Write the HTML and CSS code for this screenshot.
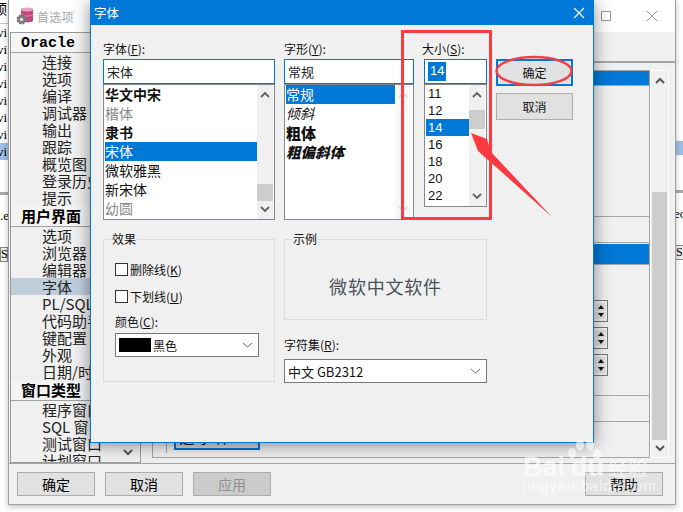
FILE: index.html
```html
<!DOCTYPE html>
<html lang="zh">
<head>
<meta charset="utf-8">
<title>字体</title>
<link rel="stylesheet" href="styles.css">
</head>
<body>
<div class="desktop">
  <div class="sliver sliver-left">
    <div class="sl-top">预</div>
    <div class="sl-row">vi</div><div class="sl-row">vi</div><div class="sl-row">vi</div><div class="sl-row">vi</div>
    <div class="sl-row">vi</div><div class="sl-row">vi</div><div class="sl-row">vi</div><div class="sl-row sl-sel">vi</div>
    <div class="sl-gap"></div>
    <div class="sl-line"></div>
    <div class="sl-text">.e</div>
    <div class="sl-btn">SE</div>
  </div>
  <div class="sliver sliver-right">
    <div class="sr-sel"></div>
    <div class="sl-line"></div>
    <div class="sl-text sr-text">eo</div>
    <div class="sl-btn sr-btn">S</div>
  </div>

  <section class="prefs">
    <header class="prefs-title">
      <svg class="app-icon" width="18" height="20" viewBox="0 0 18 20">
        <path d="M5 3.5C5 1.5 17 1.5 17 3.5V14.5C17 17 5 17 5 14.5Z" fill="#c2487c"/>
        <ellipse cx="11" cy="3.5" rx="6" ry="2" fill="#e8a3bf"/>
        <path d="M5 8.5C7 10.5 15 10.5 17 8.5" stroke="#e08aae" fill="none"/>
        <circle cx="5.5" cy="13.5" r="4" fill="#777" stroke="#777" stroke-width="2" stroke-dasharray="2 1.2"/>
        <circle cx="5.5" cy="13.5" r="1.8" fill="#e6e6e6"/>
      </svg>
      <span class="prefs-name">首选项</span>
      <span class="spacer"></span>
      <span class="win-max"></span>
      <svg class="win-close" width="12" height="12" viewBox="0 0 12 12"><path d="M1 1L11 11M11 1L1 11" stroke="#9a9a9a" fill="none"/></svg>
    </header>
    <div class="prefs-body">
      <nav class="tree">
        <div class="tree-head tree-first">Oracle</div>
        <div class="tree-item">连接</div><div class="tree-item">选项</div><div class="tree-item">编译</div>
        <div class="tree-item">调试器</div><div class="tree-item">输出</div><div class="tree-item">跟踪</div>
        <div class="tree-item">概览图</div><div class="tree-item">登录历史</div><div class="tree-item">提示</div>
        <div class="tree-head">用户界面</div>
        <div class="tree-item">选项</div><div class="tree-item">浏览器</div><div class="tree-item">编辑器</div>
        <div class="tree-item tree-sel">字体</div><div class="tree-item">PL/SQL</div><div class="tree-item">代码助手</div>
        <div class="tree-item">键配置</div><div class="tree-item">外观</div><div class="tree-item">日期/时间</div>
        <div class="tree-head">窗口类型</div>
        <div class="tree-item">程序窗口</div><div class="tree-item">SQL 窗口</div><div class="tree-item">测试窗口</div>
        <div class="tree-item">计划窗口</div>
        <svg class="tree-down" width="10" height="7" viewBox="0 0 10 7"><path d="M1 1L5 5L9 1" stroke="#555" stroke-width="2" fill="none"/></svg>
      </nav>
      <div class="panel">
        <div class="panel-top"></div>
        <div class="panel-main">
          <div class="grid-box">
            <div class="gr-blue gr-blue-a"></div>
            <div class="gr-blank gr-h1"></div>
            <div class="gr-blank gr-h2"></div>
            <div class="gr-blue gr-blue-b"></div>
            <div class="gr-spin">
              <div class="spin"><i class="tri-up"></i><i class="tri-down"></i></div>
              <div class="spin"><i class="tri-up"></i><i class="tri-down"></i></div>
              <div class="spin"><i class="tri-up"></i><i class="tri-down"></i></div>
            </div>
            <div class="gr-blank gr-h3"></div>
            <div class="gr-last">
              <span class="gr-vline"></span>
              <span class="font-btn">选字体...</span>
            </div>
          </div>
          <div class="panel-scroll">
            <svg width="10" height="7" viewBox="0 0 10 7"><path d="M1 6L5 2L9 6" stroke="#555" stroke-width="2" fill="none"/></svg>
            <div class="panel-thumb"></div>
            <svg width="10" height="7" viewBox="0 0 10 7"><path d="M1 1L5 5L9 1" stroke="#555" stroke-width="2" fill="none"/></svg>
          </div>
        </div>
      </div>
    </div>
    <footer class="prefs-foot">
      <button class="foot-btn">确定</button>
      <button class="foot-btn">取消</button>
      <button class="foot-btn foot-off">应用</button>
      <span class="spacer"></span>
      <button class="foot-btn">帮助</button>
    </footer>
  </section>

  <section class="dialog">
    <header class="dlg-title">
      <span>字体</span>
      <svg width="12" height="12" viewBox="0 0 12 12"><path d="M1 1L11 11M11 1L1 11" stroke="#fff" stroke-width="1.2" fill="none"/></svg>
    </header>
    <div class="dlg-body">
      <div class="dlg-top">
        <div class="col col-font">
          <label class="lab">字体(<u>F</u>):</label>
          <div class="input">宋体</div>
          <div class="list list-tall">
            <div class="list-items">
              <div class="li li-font li-b">华文中宋</div>
              <div class="li li-font li-grey">楷体</div>
              <div class="li li-font li-b">隶书</div>
              <div class="li li-font li-sel">宋体</div>
              <div class="li li-font">微软雅黑</div>
              <div class="li li-font">新宋体</div>
              <div class="li li-font li-grey">幼圆</div>
            </div>
            <div class="sb">
              <svg width="10" height="7" viewBox="0 0 10 7"><path d="M1 6L5 2L9 6" stroke="#606060" stroke-width="1.8" fill="none"/></svg>
              <div class="sb-fill"><div class="thumb thumb-font"></div></div>
              <svg width="10" height="7" viewBox="0 0 10 7"><path d="M1 1L5 5L9 1" stroke="#606060" stroke-width="1.8" fill="none"/></svg>
            </div>
          </div>
        </div>
        <div class="col col-style">
          <label class="lab">字形(<u>Y</u>):</label>
          <div class="input">常规</div>
          <div class="list list-tall">
            <div class="list-items">
              <div class="li li-font li-sel">常规</div>
              <div class="li li-font li-i">倾斜</div>
              <div class="li li-font li-bold">粗体</div>
              <div class="li li-font li-bi">粗偏斜体</div>
            </div>
            <div class="sb sb-off">
              <svg width="10" height="7" viewBox="0 0 10 7"><path d="M1 6L5 2L9 6" stroke="#dadada" stroke-width="1.8" fill="none"/></svg>
              <div class="sb-fill"></div>
              <svg width="10" height="7" viewBox="0 0 10 7"><path d="M1 1L5 5L9 1" stroke="#dadada" stroke-width="1.8" fill="none"/></svg>
            </div>
          </div>
        </div>
        <div class="col col-size">
          <label class="lab lab-size">大小(<u>S</u>):</label>
          <div class="input input-size"><span class="sel-text">14</span></div>
          <div class="list list-short">
            <div class="list-items">
              <div class="li li-size">11</div>
              <div class="li li-size">12</div>
              <div class="li li-size li-sel">14</div>
              <div class="li li-size">16</div>
              <div class="li li-size">18</div>
              <div class="li li-size">20</div>
              <div class="li li-size">22</div>
            </div>
            <div class="sb">
              <svg width="10" height="7" viewBox="0 0 10 7"><path d="M1 6L5 2L9 6" stroke="#606060" stroke-width="1.8" fill="none"/></svg>
              <div class="sb-fill"><div class="thumb thumb-size"></div></div>
              <svg width="10" height="7" viewBox="0 0 10 7"><path d="M1 1L5 5L9 1" stroke="#606060" stroke-width="1.8" fill="none"/></svg>
            </div>
          </div>
        </div>
        <div class="col col-btns">
          <button class="dlg-btn dlg-ok">确定</button>
          <button class="dlg-btn">取消</button>
        </div>
      </div>
      <div class="dlg-bottom">
        <fieldset class="group group-effect">
          <legend>效果</legend>
          <div class="check"><span class="box"></span>删除线(<u>K</u>)</div>
          <div class="check"><span class="box"></span>下划线(<u>U</u>)</div>
          <label class="lab lab-color">颜色(<u>C</u>):</label>
          <div class="select select-color">
            <span class="swatch"></span><span>黑色</span>
            <span class="spacer"></span>
            <svg width="11" height="6" viewBox="0 0 11 6"><path d="M1 1L5.5 5L10 1" stroke="#666" fill="none"/></svg>
          </div>
        </fieldset>
        <div class="col-sample">
          <fieldset class="group group-sample">
            <legend>示例</legend>
            <div class="sample">微软中文软件</div>
          </fieldset>
          <label class="lab lab-charset">字符集(<u>R</u>):</label>
          <div class="select select-charset">
            <span>中文 GB2312</span>
            <span class="spacer"></span>
            <svg width="11" height="6" viewBox="0 0 11 6"><path d="M1 1L5.5 5L10 1" stroke="#666" fill="none"/></svg>
          </div>
        </div>
      </div>
    </div>
  </section>

  <svg class="marks" width="683" height="512" viewBox="0 0 683 512">
    <rect x="402.5" y="31.5" width="88" height="187" fill="none" stroke="#fb3b40" stroke-width="3"/>
    <ellipse cx="534" cy="71" rx="37.5" ry="14" fill="none" stroke="#ef4048" stroke-width="2.5"/>
    <polygon points="471,133 487,139 491,152 552,217 487,159 478,151" fill="#fb3b40"/>
  </svg>

  <div class="watermark">
    <svg class="wm-paw" width="40" height="36" viewBox="0 0 40 36">
      <g fill="#fff" fill-opacity=".62">
        <ellipse cx="7" cy="13" rx="4" ry="5.5"/><ellipse cx="15" cy="5" rx="4" ry="5.5"/>
        <ellipse cx="25" cy="5" rx="4" ry="5.5"/><ellipse cx="32" cy="14" rx="4" ry="5.5"/>
      </g>
    </svg>
    <div class="wm-line"><span class="wm-bai">Bai</span><span class="wm-du">du</span><span class="wm-jy">经验</span></div>
    <div class="wm-url">jingyan.baidu.com</div>
  </div>
</div>
</body>
</html>
```

FILE: styles.css
```css
* { box-sizing: border-box; }
html, body { margin: 0; padding: 0; background: #fff; }
body { font-family: "Noto Sans CJK SC", "Liberation Sans", sans-serif; color: #000; }
.desktop { position: relative; width: 683px; height: 512px; overflow: hidden; background: #fff; }
.spacer { flex: 1; }

/* slivers of the window behind */
.sliver { position: absolute; top: 0; height: 280px; font: 13px "Liberation Serif", serif; overflow: hidden; }
.sliver-left { left: 0; width: 8px; }
.sliver-right { right: 0; width: 8px; padding-top: 141px; }
.sl-top { height: 24px; margin-left: -7px; width: 15px; font-size: 14px; line-height: 16px; font-family: "Noto Sans CJK SC", sans-serif; border-bottom: 1px solid #c4c4c4; }
.sl-row { height: 17px; line-height: 17px; margin-left: -3px; }
.sl-sel { background: #9dbfe3; }
.sl-gap { height: 32px; }
.sl-line { height: 3px; background: #a9a9a9; margin-bottom: 10px; }
.sl-text { height: 22px; line-height: 22px; }
.sr-text { margin-left: -1px; }
.sl-btn { margin-top: 20px; height: 15px; border: 1px solid #888; background: #eee; font-size: 12px; line-height: 13px; }
.sr-btn { border-right: 0; }
.sr-sel { height: 14px; background: #9dbfe3; margin-bottom: 35px; }

/* preferences window */
.prefs { position: absolute; left: 8px; top: 0; width: 668px; height: 505px; background: #f0f0f0; border: 1px solid #a0a0a0; border-top: 0; display: flex; flex-direction: column; box-shadow: 0 2px 6px rgba(0,0,0,.25); }
.prefs-title { height: 32px; background: #fff; display: flex; align-items: center; padding: 0 17px 0 7px; flex: none; }
.app-icon { flex: none; }
.prefs-name { margin-left: 3px; font-size: 12px; letter-spacing: .2px; color: #a8a8a8; }
.win-max { width: 10px; height: 10px; border: 1px solid #9a9a9a; margin-right: 35px; }
.prefs-body { flex: 1; display: flex; min-height: 0; }
.tree { position: relative; width: 131px; height: 431px; margin-left: 1px; background: #f0f0f0; border: 1px solid #9a9a9a; overflow: hidden; flex: none; }
.tree-head { height: 21px; line-height: 20px; padding-left: 10px; font-size: 15px; font-weight: 700; border-bottom: 1px solid #a0a0a0; background: #f4f4f4; }
.tree-first { height: 20px; line-height: 22px; font-family: "Liberation Mono", monospace; }
.tree-item { height: 17px; line-height: 17px; padding-left: 31px; font-size: 15px; color: #222; white-space: nowrap; }
.tree-sel { background: #bfcddb; }
.tree-down { position: absolute; right: 7px; bottom: 6px; }
.panel { flex: 1; display: flex; flex-direction: column; min-width: 0; }
.panel-top { height: 31px; border-bottom: 2px solid #a5a5a5; margin-left: 6px; flex: none; }
.panel-main { display: flex; margin: 7px 6px 0 11px; height: 388px; }
.grid-box { flex: 1; display: flex; flex-direction: column; border: 1px solid #a5a5a5; }
.gr-blue-a { height: 14px; background: #0078d7; flex: none; }
.gr-blank { flex: none; border-bottom: 1px solid #a5a5a5; }
.gr-h1 { height: 132px; border-top: 1px solid #a5a5a5; }
.gr-h2 { height: 26px; }
.gr-blue-b { height: 20px; background: #0078d7; margin-top: 1px; flex: none; }
.gr-spin { height: 131px; display: flex; flex-direction: column; align-items: flex-end; gap: 5px; padding: 35px 41px 0 0; border-top: 1px solid #a5a5a5; flex: none; }
.spin { width: 15px; height: 22px; border: 1px solid #777; padding: 2px 1px; display: flex; flex-direction: column; gap: 1px; }
.spin i { display: block; flex: 1; background: #e0e0e0; position: relative; }
.spin i::after { content: ""; position: absolute; left: 50%; top: 50%; margin: -2px 0 0 -3px; border: 3px solid transparent; }
.spin .tri-up::after { border-top: 0; border-bottom: 4px solid #111; }
.spin .tri-down::after { border-bottom: 0; border-top: 4px solid #111; }
.gr-h3 { height: 27px; border-top: 1px solid #a5a5a5; }
.gr-last { flex: 1; display: flex; align-items: flex-start; padding-left: 13px; min-height: 0; }
.gr-vline { width: 1px; height: 31px; background: #a5a5a5; }
.font-btn { margin: 3px 0 0 7px; width: 86px; height: 25px; border: 2px solid #0078d7; background: #d6d6d6; font-size: 15px; letter-spacing: 3px; line-height: 20px; text-align: center; white-space: nowrap; overflow: hidden; }
.panel-scroll { width: 19px; padding: 2px; border: 1px solid #fff; background: #f0f0f0; display: flex; flex-direction: column; align-items: center; }
.panel-scroll svg { flex: none; margin: 4px 0 6px; }
.panel-scroll svg:last-child { margin: 5px 0 3px; }
.panel-thumb { flex: 1; width: 15px; margin-top: 102px; background: #cdcdcd; }
.prefs-foot { flex: none; height: 41px; border-top: 1px solid #a5a5a5; display: flex; align-items: flex-start; padding: 8px 12px 0 8px; gap: 10px; }
.foot-btn { width: 78px; height: 24px; padding: 0; background: #e1e1e1; border: 1px solid #adadad; font: 14px "Noto Sans CJK SC", sans-serif; color: #000; }
.foot-off { background: #cccccc; color: #8f8f8f; }

/* font dialog */
.dialog { position: absolute; left: 90px; top: 0; width: 504px; height: 443px; background: #f0f0f0; border: 1px solid #0078d7; border-top: 0; box-shadow: 0 2px 16px rgba(0,0,0,.45); }
.dlg-title { height: 25px; background: #0078d7; color: #fff; font-size: 12.5px; display: flex; align-items: center; justify-content: space-between; padding: 0 9px 0 4px; margin: 0 -1px; }
.dlg-body { padding: 15px 0 0 12px; }
.dlg-top { display: flex; height: 180px; }
.col { display: flex; flex-direction: column; flex: none; }
.col-font { width: 172px; margin-right: 9px; }
.col-style { width: 130px; margin-right: 10px; }
.col-size { width: 63px; margin-right: 9px; }
.col-btns { width: 77px; padding-top: 19px; gap: 7px; }
.lab { display: block; height: 19px; line-height: 18px; font-size: 12px; color: #111; }
.lab-size { margin-left: -2px; }
.input { height: 25px; line-height: 23px; border: 1px solid #0078d7; background: #fff; padding-left: 3px; font-size: 13px; color: #222; }
.sel-text { display: inline-block; height: 19px; line-height: 18px; padding: 0 2px; margin-top: 2px; background: #0078d7; color: #fff; font-family: "Liberation Sans", sans-serif; vertical-align: top; }
.list { display: flex; background: #fff; border: 1px solid #828790; padding: 0 1px; }
.list-tall { height: 136px; }
.list-short { height: 123px; }
.list-items { flex: 1; min-width: 0; overflow: hidden; }
.li { white-space: nowrap; color: #111; }
.li-font { height: 19px; line-height: 19px; font-size: 14px; }
.li-size { height: 17px; font: 13px/17px "Liberation Sans", sans-serif; padding-left: 2px; }
.li-b { font-weight: 700; }
.li-grey { color: #8a8a8a; }
.li-i { font-style: italic; }
.li-bold { font-weight: 900; font-size: 15px; }
.li-bi { font-weight: 900; font-style: italic; font-size: 14.5px; }
.li-sel { background: #0078d7; color: #fff; }
.sb { width: 16px; flex: none; display: flex; flex-direction: column; align-items: center; justify-content: space-between; background: #f0f0f0; padding: 6px 0; }
.col-style .list-items { flex: none; width: 109px; }
.sb-off { background: #f8f8f8; }
.sb-fill { flex: 1; width: 100%; position: relative; }
.thumb { position: absolute; left: 0; width: 100%; background: #cdcdcd; }
.thumb-font { top: 86px; height: 17px; }
.thumb-size { top: 12px; height: 19px; }
.dlg-btn { height: 27px; padding: 0; background: #e1e1e1; border: 1px solid #adadad; font: 12px "Noto Sans CJK SC", sans-serif; color: #111; }
.dlg-ok { border: 2px solid #0078d7; }
.dlg-bottom { display: flex; margin-top: 12px; }
.group { margin: 0; padding: 0 0 0 11px; border: 1px solid #dcdcdc; min-width: 0; }
.group legend { padding: 0 1px; margin-left: -4px; font-size: 12px; line-height: 14px; color: #111; }
.group-effect { width: 172px; height: 150px; margin-right: 9px; }
.col-sample { width: 203px; display: flex; flex-direction: column; }
.group-sample { width: 203px; height: 88px; }
.sample { text-align: center; font-size: 18px; letter-spacing: .8px; color: #4a5058; margin: 27px 0 0 -11px; line-height: 26px; }
.check { display: flex; align-items: center; height: 16px; margin-top: 15px; margin-bottom: 11px; font-size: 12px; color: #111; white-space: nowrap; }
.check + .check { margin-top: 0; }
.box { width: 13px; height: 13px; border: 1px solid #333; background: #fff; margin-right: 2px; flex: none; }
.lab-color { height: 14px; line-height: 14px; margin-top: 1px; }
.select { display: flex; align-items: center; height: 24px; background: #fff; border: 1px solid #7a7a7a; padding: 0 5px 0 3px; font-size: 12px; color: #111; }
.select-color { width: 144px; margin-top: 4px; }
.swatch { width: 32px; height: 14px; background: #000; margin-right: 2px; }
.lab-charset { margin-top: 17px; height: 15px; line-height: 15px; }
.select-charset { width: 203px; margin-top: 7px; font-size: 13px; }

/* annotations */
.marks { position: absolute; left: 0; top: 0; pointer-events: none; }
.watermark { position: absolute; left: 523px; top: 440px; width: 130px; height: 60px; color: rgba(255,255,255,.68); }
.wm-paw { position: absolute; left: 42px; top: 0; }
.wm-line { position: absolute; left: 0; top: 12px; display: flex; align-items: baseline; white-space: nowrap; }
.wm-bai, .wm-du { font: 700 27px "Liberation Sans", sans-serif; }
.wm-du { margin-left: 6px; }
.wm-jy { font-size: 20px; margin-left: 4px; }
.wm-url { position: absolute; left: 0; top: 37px; font: 15px "Liberation Sans", sans-serif; letter-spacing: .75px; white-space: nowrap; }
```
